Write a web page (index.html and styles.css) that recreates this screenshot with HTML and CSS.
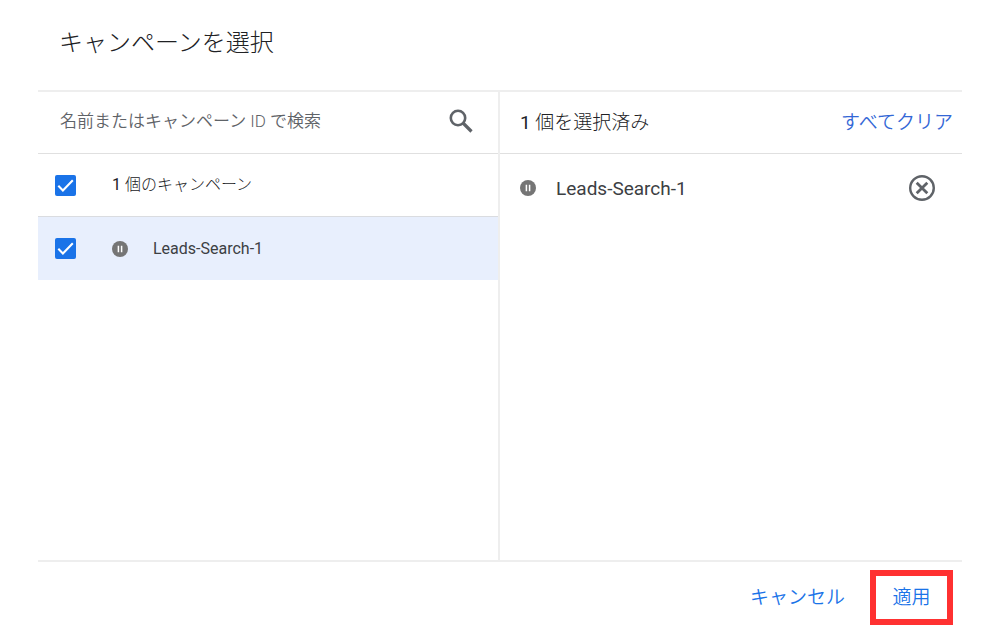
FILE: index.html
```html
<!DOCTYPE html>
<html lang="ja">
<head>
<meta charset="utf-8">
<meta name="viewport" content="width=device-width, initial-scale=1">
<title>キャンペーンを選択</title>
<link rel="stylesheet" href="styles.css">
</head>
<body>
<main class="dialog">
  <h1 class="title">キャンペーンを選択</h1>
  <div class="panes">
    <section class="pane pane-left">
      <div class="bar search">
        <input class="search-input" type="text" aria-label="名前またはキャンペーン ID で検索" placeholder="名前またはキャンペーン ID で検索">
        <button class="icon-button" type="button" aria-label="検索">
          <svg class="icon-search" viewBox="0 0 24 24"><circle cx="9" cy="9" r="7.2" fill="none" stroke="currentColor" stroke-width="2.6"/><path d="M14 14l8.5 8.5" fill="none" stroke="currentColor" stroke-width="3.2"/></svg>
        </button>
      </div>
      <label class="row">
        <input class="check" type="checkbox" checked>
        <span class="row-total"><span class="latin">1</span> 個のキャンペーン</span>
      </label>
      <label class="row selected">
        <input class="check" type="checkbox" checked>
        <svg class="icon-pause" viewBox="0 0 16 16"><circle cx="8" cy="8" r="8" fill="#757575"/><path d="M6.4 4.8v6.4M9.6 4.8v6.4" stroke="#fff" stroke-width="1.5"/></svg>
        <span class="row-name">Leads-Search-1</span>
      </label>
    </section>
    <section class="pane">
      <div class="bar chosen">
        <span><span class="latin">1</span> 個を選択済み</span>
        <button class="text-button clear" type="button">すべてクリア</button>
      </div>
      <div class="item">
        <svg class="icon-pause" viewBox="0 0 16 16"><circle cx="8" cy="8" r="8" fill="#757575"/><path d="M6.4 4.8v6.4M9.6 4.8v6.4" stroke="#fff" stroke-width="1.5"/></svg>
        <span class="item-name">Leads-Search-1</span>
        <button class="icon-button" type="button" aria-label="Leads-Search-1 を削除">
          <svg class="icon-remove" viewBox="0 0 26 26"><circle cx="13" cy="13" r="11.8" fill="none" stroke="currentColor" stroke-width="2.4"/><path d="M7.7 7.7l10.6 10.6M18.3 7.7L7.7 18.3" stroke="currentColor" stroke-width="2.8"/></svg>
        </button>
      </div>
    </section>
  </div>
  <footer class="actions">
    <button class="text-button cancel" type="button">キャンセル</button>
    <button class="text-button apply" type="button">適用</button>
  </footer>
</main>
</body>
</html>
```
FILE: styles.css
```css
* {
  box-sizing: border-box;
}

body {
  margin: 0;
  background: #fff;
  color: #3c4043;
  font-family: Roboto, "Noto Sans CJK JP", sans-serif;
  font-size: 19px;
  font-weight: 400;
}

button,
input {
  margin: 0;
  font: inherit;
}

.dialog {
  display: flex;
  flex-direction: column;
  min-height: 100vh;
  padding: 0 38px;
}

.title {
  margin: 0;
  padding: 25px 21px 29px;
  color: #202124;
  font-size: 24px;
  font-weight: 300;
  line-height: 36px;
}

.panes {
  display: grid;
  grid-template-columns: 1fr 1fr;
  flex: 1;
  border-top: 2px solid #eee;
  border-bottom: 2px solid #eee;
}

.pane-left {
  border-right: 2px solid #eee;
}

.bar {
  display: flex;
  align-items: center;
  height: 62px;
  padding-bottom: 4px;
  border-bottom: 1px solid #e0e0e0;
  color: #202124;
  font-weight: 300;
}

.latin {
  font-weight: 400;
}

.search {
  padding-right: 25px;
  padding-left: 22px;
}

.search-input {
  flex: 1;
  min-width: 0;
  padding: 0;
  border: 0;
  outline: 0;
  background: transparent;
  font-size: 17px;
  font-weight: 350;
}

.search-input::placeholder {
  color: #5f6368;
  opacity: 1;
}

.icon-button {
  display: flex;
  padding: 0;
  border: 0;
  background: transparent;
  color: #5f6368;
  cursor: pointer;
}

.icon-search {
  width: 24px;
  height: 24px;
}

.row {
  display: flex;
  align-items: center;
  height: 63px;
  padding: 0 17px;
  border-bottom: 1px solid #dadce0;
  font-size: 16px;
}

.row-total {
  padding-bottom: 4px;
  color: #202124;
  font-weight: 300;
}

.selected {
  border-bottom: 0;
  background: #e8effd;
}

.check {
  appearance: none;
  flex: none;
  width: 21px;
  height: 21px;
  margin-right: 36px;
  border-radius: 2px;
  background: #1a73e8;
}

.check:checked {
  background-image: url("data:image/svg+xml,%3Csvg xmlns='http://www.w3.org/2000/svg' viewBox='0 0 21 21'%3E%3Cpath d='M3.3 10.8l4.6 4.6L17.8 5.2' fill='none' stroke='white' stroke-width='2.1'/%3E%3C/svg%3E");
}

.icon-pause {
  flex: none;
  width: 16px;
  height: 16px;
}

.row-name {
  margin-left: 25px;
}

.chosen {
  padding-right: 9px;
  padding-left: 20px;
  justify-content: space-between;
}

.item {
  display: flex;
  align-items: center;
  height: 68px;
  padding: 0 27px 0 20px;
}

.item-name {
  flex: 1;
  margin-left: 20px;
}

.icon-remove {
  width: 26px;
  height: 26px;
}

.text-button {
  padding: 0;
  border: 0;
  background: transparent;
  color: #1a73e8;
  font-weight: 350;
  cursor: pointer;
}

.clear {
  color: #3367d6;
}

.actions {
  display: flex;
  align-items: center;
  justify-content: flex-end;
  gap: 25px;
  padding: 8px 9px 0 0;
}

.cancel {
  padding-bottom: 4px;
}

.apply {
  width: 83px;
  height: 55px;
  padding-bottom: 4px;
  border: 6px solid #ff3131;
}
```
